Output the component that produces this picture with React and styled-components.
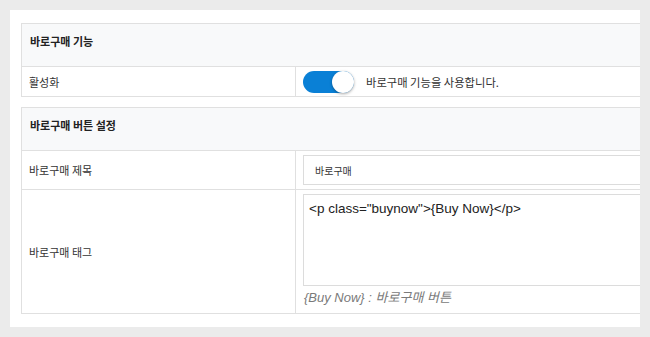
import React from "react";
import styled, { createGlobalStyle } from "styled-components";

const Global = createGlobalStyle`
  html, body { margin: 0; padding: 0; background: #ebebeb; }
  body { font-family: "Noto Sans CJK KR", "Noto Sans", sans-serif; color: #222; }
`;

const Panel = styled.div`
  margin: 10px;
  width: 630px;
  height: 317px;
  box-sizing: border-box;
  background: #fff;
  padding: 13px 0 0 11px;
  overflow: hidden;
  display: flex;
  flex-direction: column;
  gap: 10px;
`;

const Table = styled.div`
  width: 720px;
  flex-shrink: 0;
  border: 1px solid #e0e0e0;
  display: flex;
  flex-direction: column;
`;

const Header = styled.div`
  height: 42px;
  flex-shrink: 0;
  box-sizing: border-box;
  background: #f8f9fa;
  padding: 8px 8px 0;
  font-size: 11px;
  font-weight: 700;
  line-height: 18px;
  color: #222;
`;

const Row = styled.div`
  display: grid;
  grid-template-columns: 274px 1fr;
  height: ${(p) => p.$h}px;
  flex-shrink: 0;
  border-top: 1px solid #e0e0e0;
  box-sizing: border-box;
  overflow: hidden;
`;

const Label = styled.div`
  display: flex;
  align-items: center;
  padding-left: 7px;
  border-right: 1px solid #e0e0e0;
  font-size: 11px;
  color: #333;
`;

const Value = styled.div`
  display: flex;
  align-items: center;
  gap: 12px;
  padding: 0 7px;
`;

const Stack = styled.div`
  display: flex;
  flex-direction: column;
  padding: 4px 7px 0;
`;

const Toggle = styled.div`
  position: relative;
  width: 51px;
  height: 22px;
  border-radius: 11px;
  background: #0a80d6;
  flex-shrink: 0;
`;

const Knob = styled.div`
  position: absolute;
  right: 0;
  top: 0;
  width: 22px;
  height: 22px;
  border-radius: 50%;
  background: #fff;
  box-shadow: 0 1px 3px rgba(0, 0, 0, 0.35);
`;

const Desc = styled.span`
  font-size: 11.3px;
  color: #333;
`;

const Input = styled.div`
  height: 30px;
  box-sizing: border-box;
  border: 1px solid #dcdcdc;
  display: flex;
  align-items: center;
  padding-left: 11px;
  font-size: 10px;
  color: #333;
`;

const TextArea = styled.div`
  height: 92px;
  box-sizing: border-box;
  border: 1px solid #dcdcdc;
  padding: 5px 5px;
  font-family: "Liberation Sans", Arial, sans-serif;
  font-size: 13.5px;
  line-height: 18px;
  color: #222;
`;

const Help = styled.div`
  margin-top: 3px;
  font-family: "Liberation Sans", "Noto Sans CJK KR", sans-serif;
  font-style: italic;
  font-size: 13px;
  line-height: 18px;
  color: #7a7a7a;
  padding-left: 1px;
`;

export default function App() {
  return (
    <>
      <Global />
      <Panel>
        <Table>
          <Header>바로구매 기능</Header>
          <Row $h={30}>
            <Label>활성화</Label>
            <Value>
              <Toggle>
                <Knob />
              </Toggle>
              <Desc>바로구매 기능을 사용합니다.</Desc>
            </Value>
          </Row>
        </Table>
        <Table>
          <Header>바로구매 버튼 설정</Header>
          <Row $h={39}>
            <Label>바로구매 제목</Label>
            <Stack>
              <Input>바로구매</Input>
            </Stack>
          </Row>
          <Row $h={124}>
            <Label>바로구매 태그</Label>
            <Stack>
              <TextArea>{'<p class="buynow">{Buy Now}</p>'}</TextArea>
              <Help>{"{Buy Now} : 바로구매 버튼"}</Help>
            </Stack>
          </Row>
        </Table>
      </Panel>
    </>
  );
}
